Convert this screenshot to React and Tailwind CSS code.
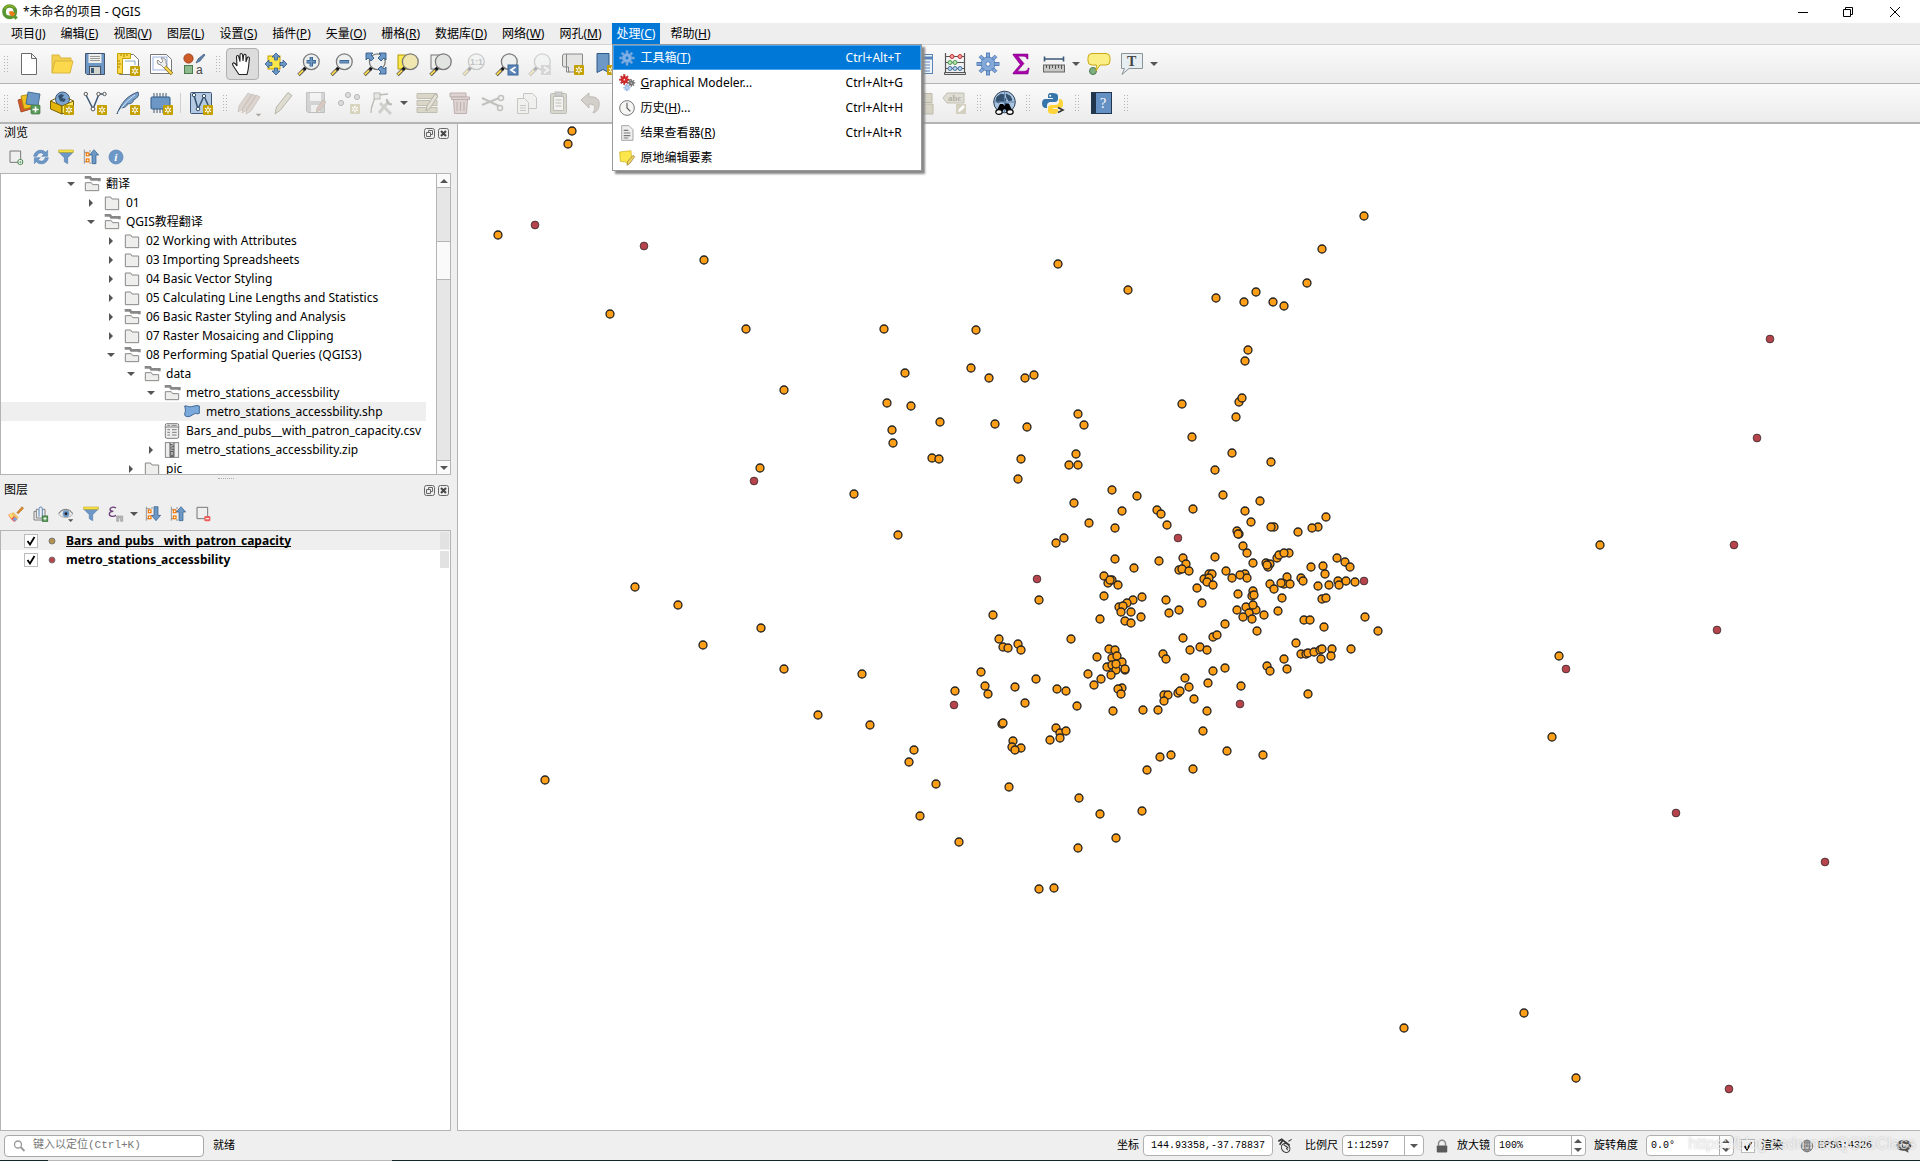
import React, { useState } from "react";

// ---------- icon parts ----------

function Star({ x = 13, y = 13, color = "#c4a000" }) {
  return (
    <g>
      <rect x={x} y={y} width="10" height="10" rx="1" fill={color} />
      <path
        d={`M${x + 5} ${y + 1.5}v7M${x + 2} ${y + 3.2}l6 3.6M${x + 8} ${y + 3.2}l-6 3.6`}
        stroke="#fff"
        strokeWidth="1.3"
      />
      <circle cx={x + 5} cy={y + 5} r="1" fill={color} />
    </g>
  );
}

function Lens({ children, glass = "#eef0f0" }) {
  return (
    <g>
      <path d="M1.5 23L8 16.5" stroke="#4d4d4d" strokeWidth="3.4" />
      <path d="M1.7 22.6L6 18.4" stroke="#fcd94c" strokeWidth="2" />
      <path d="M7 17.5l2-2" stroke="#111" strokeWidth="3" />
      <circle cx="14.3" cy="9.7" r="7.9" fill={glass} stroke="#7a7a7a" strokeWidth="1.3" />
      {children}
    </g>
  );
}

function Gear({ cx, cy, r, fill, stroke, hole = "#fff" }) {
  const teeth = [0, 45, 90, 135, 180, 225, 270, 315];
  return (
    <g>
      {teeth.map(a => (
        <rect
          key={a}
          x={cx - r * 0.14}
          y={cy - r}
          width={r * 0.28}
          height={r * 0.5}
          fill={fill}
          stroke={stroke}
          strokeWidth={r * 0.08}
          transform={`rotate(${a} ${cx} ${cy})`}
        />
      ))}
      <circle cx={cx} cy={cy} r={r * 0.64} fill={fill} stroke={stroke} strokeWidth={r * 0.08} />
      <circle cx={cx} cy={cy} r={r * 0.2} fill={hole} stroke={stroke} strokeWidth={r * 0.08} />
    </g>
  );
}

const GLOBE_LAND = "M5 6l4-3 3 1-1 3 3 1-1 3-4-1-3 2-2-2zM14 3l4 2 2 4-3 1-2-3zM13 12l4 1-1 4-3-1z";

const ICONS = {
  newFile: <path d="M4.5 1.5h10l5 5v16h-15zM14.5 1.5v5h5" fill="#fff" stroke="#6b6b6b" />,
  open: (
    <g stroke="#d8b43c">
      <path d="M2 21V3h7l2 3h10v4" fill="#f3cf4e" />
      <path d="M2 21L5 9h18l-3 12z" fill="#fcd94c" />
    </g>
  ),
  save: (
    <g>
      <path d="M2.5 1.5h19v21H4l-1.5-1.5z" fill="#6d97c4" stroke="#44546a" />
      <rect x="5.5" y="2" width="13" height="9" fill="#eeeeec" />
      <path d="M7 4.5h10M7 6.5h10M7 8.5h10" stroke="#9a9a98" />
      <rect x="6.5" y="14.5" width="11" height="8" fill="#d3d7cf" stroke="#44546a" />
      <rect x="8" y="16" width="3" height="5" fill="#3b5876" />
    </g>
  ),
  layout: (
    <g>
      <path d="M3.5 2.5h14l5 5v15h-19z" fill="#fff" stroke="#777" />
      <path d="M1.5 1.5h13v5h-8v15h-5z" fill="#fcd94c" stroke="#c4a000" />
      <path d="M5 2v2M8 2v3M11 2v2M2 9h2M2 12h3M2 15h2" stroke="#a08000" />
      <path d="M9 9h10v4" stroke="#8ab" fill="none" />
      <Star x={14} y={14} />
    </g>
  ),
  layoutManager: (
    <g>
      <path d="M1.5 2.5h16l5 5v14h-21z" fill="#fff" stroke="#777" />
      <rect x="4" y="5" width="14" height="13" fill="#fff" stroke="#99b3e0" />
      <path d="M9 8l3 3 2-2-2-3a4 4 0 015 5l1 2-3 3-3-3a4 4 0 01-4-4z" fill="#eee" stroke="#777" strokeWidth=".8" />
      <path d="M16 15l7 7" stroke="#8c7320" strokeWidth="3.6" />
      <path d="M16 15l6.5 6.5" stroke="#fcd94c" strokeWidth="2" />
    </g>
  ),
  style: (
    <g>
      <circle cx="6.5" cy="6.5" r="4.6" fill="#cf5c28" stroke="#a0431a" />
      <path d="M14 11l2-4 6-5 1 1-5 6z" fill="#5b84b8" stroke="#44546a" strokeWidth=".7" />
      <rect x="2.5" y="13.5" width="8" height="8" fill="#8fb98f" stroke="#4a7c4e" />
      <text x="14" y="22" fontSize="12" fontFamily="Liberation Sans" fill="#444">a</text>
    </g>
  ),
  pan: (
    <path
      d="M8 22.5L3 15c-1.5-2-2-3.5-.8-4 1.2-.5 2.600 1 3.800 3L5.500 5.200c-.2-2 2-2.200 2.300-.4L9 9.500V3c0-2 2.300-2 2.500 0l.5 6 .6-5.500c.3-1.800 2.400-1.500 2.400.3L15 10l1.200-4c.6-1.700 2.500-1 2.200.6L17.500 15c-.2 3-.8 5-1.500 7.500z"
      fill="#fff"
      stroke="#222"
      strokeWidth="1.1"
    />
  ),
  panSelect: (
    <g>
      <rect x="4" y="4" width="12" height="13" fill="#fbe64b" stroke="#c4a000" />
      <g fill="#6d97c4" stroke="#2f5a88" strokeWidth=".8">
        <path d="M12 1l4 4h-2.500v3h-3V5H8zM12 23l-4-4h2.500v-3h3v3H16zM1 12l4-4v2.500h3v3H5V16zM23 12l-4 4v-2.500h-3v-3h3V8z" />
      </g>
    </g>
  ),
  zoomIn: (
    <Lens>
      <path d="M14.3 5v9.4M9.6 9.7H19" stroke="#2f5a88" strokeWidth="3.4" />
      <path d="M14.3 5.5v8.4M10.1 9.7h8.4" stroke="#6d97c4" strokeWidth="1.8" />
    </Lens>
  ),
  zoomOut: (
    <Lens>
      <path d="M9.5 9.7h9.6" stroke="#2f5a88" strokeWidth="3.4" />
      <path d="M10 9.7h8.6" stroke="#6d97c4" strokeWidth="1.8" />
    </Lens>
  ),
  zoomFull: (
    <g>
      <Lens />
      <path
        d="M3 1h7L8 3l3 3-3 3-3-3-2 2zM23 1v7l-2-2-3 3-3-3 3-3-2-2zM23 22h-7l2-2-3-3 3-3 3 3 2-2z"
        fill="#6d97c4"
        stroke="#2f5a88"
        strokeWidth=".9"
      />
    </g>
  ),
  zoomSelection: (
    <g>
      <rect x="2" y="3" width="13" height="14" fill="#fce94f" stroke="#b39700" />
      <Lens glass="#f0e7b0" />
    </g>
  ),
  zoomLayer: (
    <g>
      <rect x="2" y="3" width="13" height="14" fill="#eee" stroke="#777" />
      <Lens glass="#e2e4e2" />
    </g>
  ),
  zoomNative: (
    <g opacity=".35">
      <Lens>
        <text x="8" y="13" fontSize="9" fontWeight="bold" fontFamily="Liberation Sans" fill="#666">1:1</text>
      </Lens>
    </g>
  ),
  zoomLast: (
    <g>
      <Lens />
      <rect x="13" y="13" width="10" height="10" fill="#5b84b8" stroke="#3c6797" />
      <path d="M20.5 15L16 18l4.5 3" stroke="#fff" strokeWidth="1.7" fill="none" />
    </g>
  ),
  zoomNext: (
    <g opacity=".3">
      <Lens />
      <rect x="13" y="13" width="10" height="10" fill="#999" />
      <path d="M16 15l4.5 3-4.5 3" stroke="#fff" strokeWidth="1.7" fill="none" />
    </g>
  ),
  mapView: (
    <g>
      <path d="M3.5 2h18v18h-14V15h-4a2 2 0 01-2-2V4a2 2 0 012-2z" fill="#e4e4e2" stroke="#888" />
      <path d="M5.5 2v18h3" fill="none" stroke="#888" />
      <Star />
    </g>
  ),
  bookmark: (
    <g>
      <path d="M3 1.5h12v19l-6-3-6 3z" fill="#6d97c4" stroke="#2f5a88" />
      <Star />
    </g>
  ),
  table: (
    <g>
      <rect x="1.5" y="2.5" width="21" height="19" fill="#eef3fa" stroke="#5b84b8" />
      <path d="M1.5 6h21" stroke="#5b84b8" strokeWidth="3" />
      <path d="M4 10h16M4 13h16M4 16h16M4 19h16" stroke="#5b84b8" />
    </g>
  ),
  abacus: (
    <g>
      <path d="M2.5 1v20M21.5 1v20M2 4.5h20M2 10.5h20M2 16.5h20" stroke="#555" strokeWidth="1.2" />
      <path d="M1.5 20.5h21v2h-21z" fill="#ddd" stroke="#555" />
      <g fill="#f3a0a0" stroke="#c23030"><circle cx="9" cy="4.5" r="2" /><circle cx="17" cy="4.5" r="2" /></g>
      <g fill="#b8e6b0" stroke="#4c9a4c"><circle cx="7" cy="10.5" r="2" /><circle cx="12" cy="10.5" r="2" /></g>
      <g fill="#b9d4ee" stroke="#44719e"><circle cx="7" cy="16.5" r="2" /><circle cx="12" cy="16.5" r="2" /><circle cx="17" cy="16.5" r="2" /></g>
    </g>
  ),
  gear: <Gear cx={12} cy={12} r={11} fill="#84a9d8" stroke="#4b7ab5" />,
  sigma: <path d="M4 2h15v5h-1c-.6-2-1.5-2.8-4-2.8H9l6 7.3-6.5 7.7H15c2.5 0 3.6-1 4.2-3.2h1L19 22H4v-1l7.2-8.5L4 3z" fill="#a800a8" stroke="#7b0080" strokeWidth=".5" />,
  ruler: (
    <g>
      <path d="M2 7h20M2.5 4.5v5M21.5 4.5v5" stroke="#3b5876" strokeWidth="1.6" />
      <rect x="1.5" y="13" width="21" height="7" fill="#c8c8c6" stroke="#666" />
      <path d="M4.5 13v3M7.5 13v4M10.5 13v3M13.5 13v4M16.5 13v3M19.5 13v4" stroke="#555" />
    </g>
  ),
  mapTip: (
    <g>
      <circle cx="6" cy="19" r="3.5" fill="#7fae80" stroke="#4a7c4e" />
      <path d="M5 1.5h14a4 4 0 014 4V9a4 4 0 01-4 4h-6l-4 6 .5-6H5a4 4 0 01-4-4V5.5a4 4 0 014-4z" fill="#fbee85" stroke="#c9aa14" />
    </g>
  ),
  textNote: (
    <g>
      <path d="M1.5 1.5h21v15H9l-7 6 2.500-6h-3z" fill="#e6eef2" stroke="#8a9499" />
      <text x="7" y="13.5" fontSize="14" fontWeight="bold" fontFamily="Liberation Serif" fill="#444">T</text>
    </g>
  ),
  dataSource: (
    <g>
      <path d="M1 9l9-3 4 12-10 3z" fill="#d4582a" stroke="#9d3c16" strokeWidth=".8" />
      <path d="M4 5l10-2 3 13-10 2z" fill="#f0c020" stroke="#a58400" strokeWidth=".8" />
      <path d="M11 1l12 2-2 12-12-2z" fill="#6d97c4" stroke="#2f5a88" strokeWidth=".8" />
      <rect x="14" y="14" width="9" height="9" rx="1" fill="#5a9a5a" stroke="#3e7a40" strokeWidth=".7" />
      <path d="M18.5 15.5v6M15.5 18.5h6" stroke="#fff" strokeWidth="1.5" />
    </g>
  ),
  geopackage: (
    <g>
      <circle cx="12.5" cy="8" r="7" fill="#7ba3d0" stroke="#3b5876" />
      <path d="M8 5l3-2 3 1-2 3 4 1-2 3-4-1z" fill="#33506e" />
      <path d="M.5 10L12 15v8L.5 18z" fill="#e3b50a" stroke="#7a6000" />
      <path d="M12 15l11.5-5v8L12 23z" fill="#fcee5a" stroke="#7a6000" />
      <path d="M.5 10l5-2.5M23.5 10l-5-2.5" stroke="#7a6000" />
      <Star x={14} y={14} />
    </g>
  ),
  shapefile: (
    <g>
      <path d="M3 4l7 14 6-15h5" fill="none" stroke="#3b5876" strokeWidth="1.5" />
      <g fill="#fff" stroke="#555"><circle cx="2.8" cy="3" r="1.7" /><circle cx="10" cy="18" r="1.9" /><circle cx="15.5" cy="3" r="1.7" /><circle cx="21.5" cy="3" r="1.7" /></g>
      <Star x={14} y={14} />
    </g>
  ),
  feather: (
    <g>
      <path d="M1 23C5 13 10 5 22 1c2 4-2 7-5 8 1 2-2 4-6 4 1 2-3 4-7 4z" fill="#7ba3d0" stroke="#3b5876" />
      <path d="M2 22C8 13 13 8 19 4" fill="none" stroke="#dbe8f5" />
      <Star x={14} y={14} />
    </g>
  ),
  memory: (
    <g>
      <path d="M5 2v20M8 2v20M11 2v20M14 2v20M17 2v20" stroke="#44546a" />
      <rect x="2" y="6" width="19" height="12" rx="1" fill="#6d97c4" stroke="#2f5a88" />
      <Star x={14} y={14} />
    </g>
  ),
  virtual: (
    <g>
      <rect x="1.5" y="1.5" width="21" height="21" rx="1" fill="#b5cae2" stroke="#3b5876" />
      <path d="M5 4l4 14 6-13 5 11" fill="none" stroke="#33506e" strokeWidth="1.5" />
      <g fill="#fff" stroke="#33506e"><circle cx="5" cy="4" r="1.7" /><circle cx="9" cy="18" r="1.8" /><circle cx="15" cy="5" r="1.7" /></g>
      <Star x={14} y={14} />
    </g>
  ),
  pencils: (
    <g fill="#dcd4ce" stroke="#c9c0ba" strokeWidth=".8">
      <path d="M0 21l1-6L10 2l4 2-9 14zM4 22l1-6 9-13 4 2-9 14zM8 23l1-6 9-13 4 2-9 14z" />
      <path d="M18 23h5l-2.500 2z" fill="#888" />
    </g>
  ),
  pencil: <path d="M4 23l1.5-7L17 1.5l4 3L9.500 19z" fill="#dedbd0" stroke="#b9b6aa" />,
  saveEdits: (
    <g>
      <g opacity=".35"><path d="M2.5 1.5h18v20H4l-1.5-1.5z" fill="#999" stroke="#666" /><path d="M6 2h11v8H6zM7 14h9v7H7z" fill="#eee" /></g>
      <path d="M12 22l1-5 6-8 3 2-6 8z" fill="#dac8c4" stroke="#bba" strokeWidth=".7" />
    </g>
  ),
  addPoint: (
    <g>
      <g fill="#dcdcdc" stroke="#b9b9b9"><circle cx="11" cy="4" r="2.6" /><circle cx="4" cy="12" r="2.6" /><circle cx="20" cy="6" r="2.6" /></g>
      <Star color="#d8d3bc" />
    </g>
  ),
  vertexTool: (
    <g stroke="#b9b9b5" fill="none">
      <path d="M1 22C1 14 5 6 8 5M8 4l10-1" strokeWidth="1.3" />
      <rect x="4" y="2" width="6" height="6" fill="#e6e6e4" />
      <path d="M9 22L19 10M10 12l11 11" strokeWidth="3" stroke="#cfcfcb" />
      <path d="M17 8a4 4 0 005 5" strokeWidth="2" />
    </g>
  ),
  multiEdit: (
    <g>
      <path d="M2 2.5h20v5H2zM2 9.5h20v5H2zM2 16.5h20v5H2z" fill="#dad7c8" stroke="#c0beb0" />
      <path d="M11 20l1-5 8-12 3 2-8 12z" fill="#e4e2d8" stroke="#b5b2a5" />
    </g>
  ),
  trash: (
    <g fill="#dfd3d2" stroke="#bdb0af">
      <path d="M2 2h16v4H2z" />
      <path d="M5.5 8.5h14l-1 14h-12zM3.5 6h18v2.500h-18zM9 11v9M12.5 11v9M16 11v9" />
    </g>
  ),
  cut: (
    <g stroke="#c2c2bf" fill="none" strokeWidth="1.5">
      <path d="M1 7l17 8M1 14l17-7" strokeWidth="2.2" />
      <circle cx="20" cy="7" r="2.5" /><circle cx="19" cy="17" r="2.5" />
    </g>
  ),
  copy: (
    <g fill="#f0f0ee" stroke="#c6c6c3">
      <path d="M9.5 2.5h9l4 4v11h-13z" />
      <path d="M3.5 7.5h7l4 4v11h-11zM6 14.5h6M6 17h6M6 19.5h6" />
    </g>
  ),
  paste: (
    <g stroke="#bdbdb8">
      <rect x="3.5" y="2.5" width="16" height="20" rx="1" fill="#d8d6cc" />
      <path d="M6.5 5.5h10v14h-10zM8.5 9h6M8.5 12h6M8.5 15h6" fill="#f3f3f1" />
      <rect x="8" y="1" width="7" height="4" fill="#ccc" />
    </g>
  ),
  undo: <path d="M1 9l8-7v4c8-1 11 3 10 9-.5 3-2 6-6 7 3-5 3-9-4-9v4z" fill="#d3cfcb" stroke="#beb9b4" />,
  labelMove: <path d="M2 2.5h20v9H2zM13 13h10v10H13z" fill="#d6d3c4" stroke="#bdbaa9" />,
  labelEdit: (
    <g>
      <path d="M0 7l4-5h17v10H4z" fill="#deddd3" stroke="#c2c0b2" />
      <text x="5" y="10" fontSize="9" fontWeight="bold" fontFamily="Liberation Serif" fill="#b2b0a3">abc</text>
      <rect x="13" y="13" width="10" height="10" fill="#d3d0c0" />
      <path d="M15 21l1-3 4-4 2 2-4 4z" fill="#fff" />
    </g>
  ),
  globeSearch: (
    <g>
      <circle cx="12.5" cy="11" r="10.8" fill="#a9c3e0" stroke="#2f4257" />
      <path d={GLOBE_LAND} fill="#33506e" stroke="#33506e" />
      <path d="M2 11h21M12.5 0v22" stroke="#5f82a8" />
      <path d="M8 13h3l1.500 2 1.500-2h3l4 8h-6l-2-3h-1l-2 3H4z" fill="#000" />
      <ellipse cx="7" cy="21" rx="3.2" ry="2.4" fill="#fff" stroke="#000" strokeWidth="1.2" />
      <ellipse cx="18" cy="21" rx="3.2" ry="2.4" fill="#fff" stroke="#000" strokeWidth="1.2" />
    </g>
  ),
  python: (
    <g>
      <path d="M11 2c-4 0-4 1.500-4 3v2h5v1H4.500C2 8 1 10 1 12.500S2.500 17 4.500 17H6v-2.500C6 12.500 7.500 11 9.500 11H14c1.500 0 3-1 3-3V5c0-2-2-3-6-3z" fill="#3776ab" />
      <circle cx="9.2" cy="4.8" r="1" fill="#fff" />
      <path d="M12 23c4 0 5-1.500 5-3v-2h-5v-1h7c2.500 0 3-2 3-4.500S21 8 19 8h-1v2.500c0 2-1.500 3.500-3.500 3.500H10c-1.500 0-3 1-3 3v3c0 2 1.500 3 5 3z" fill="#ffd43b" />
      <path d="M17 16.500l5 2.500-5 2.500" fill="none" stroke="#333" strokeWidth="1.5" />
    </g>
  ),
  help: (
    <g>
      <rect x="1.5" y="1.5" width="20" height="21" fill="#6590c4" stroke="#22364d" />
      <rect x="2" y="2" width="4" height="20" fill="#22364d" />
      <text x="10" y="17" fontSize="14" fontFamily="Liberation Serif" fill="#fff">?</text>
    </g>
  ),
  // panel icons
  addLayer: (
    <g fill="none" stroke="#777" strokeWidth="1.5">
      <path d="M3 3h16v17H3z" />
      <rect x="15" y="16" width="7" height="7" rx="2" fill="#fff" stroke="#4a8a4e" />
      <path d="M18.5 18v3.500M17 19.700h3.500" stroke="#4a8a4e" strokeWidth="1" />
    </g>
  ),
  refresh: (
    <g fill="#6d97c4" stroke="#4b7ab5" strokeWidth=".8">
      <path d="M1 11C2 5 7 1 13 2c3 .4 5 2 6 3l3-3v9h-9l3-3c-4-4-9-2-10 3z" />
      <path d="M23 13c-1 6-6 10-12 9-3-.4-5-2-6-3l-3 3v-9h9l-3 3c4 4 9 2 10-3z" />
    </g>
  ),
  filter: (
    <g>
      <path d="M2 3h20v2.500L14.500 13v9l-5-3v-6L2 5.500z" fill="#6d97c4" stroke="#4b7ab5" />
      <path d="M1 1.500h22v3.500H1z" fill="#fce94f" stroke="#b39700" strokeWidth=".8" />
    </g>
  ),
  collapse: (
    <g>
      <path d="M2 1v21M2 5h6M2 19h6M9 3h3M9 21h3" stroke="#888" strokeWidth="1.3" />
      <rect x="5" y="6" width="4" height="4" fill="#fff" stroke="#f57900" strokeWidth="1.8" />
      <rect x="5" y="15" width="4" height="4" fill="#fff" stroke="#f57900" strokeWidth="1.8" />
      <path d="M16.500 1l7 8h-4v13h-6V9h-4z" fill="#6d97c4" stroke="#2f5a88" />
    </g>
  ),
  expand: (
    <g>
      <path d="M2 1v21M2 4h6M2 19h6M9 3h3" stroke="#888" strokeWidth="1.3" />
      <rect x="5" y="6" width="4" height="4" fill="#fff" stroke="#f57900" strokeWidth="1.8" />
      <rect x="5" y="15" width="4" height="4" fill="#fff" stroke="#f57900" strokeWidth="1.8" />
      <path d="M16.500 22l7-8h-4V1h-6v13h-4z" fill="#6d97c4" stroke="#2f5a88" />
    </g>
  ),
  info: (
    <g>
      <circle cx="12" cy="12" r="10.5" fill="#6d97c4" stroke="#4b7ab5" />
      <text x="9.5" y="18" fontSize="17" fontStyle="italic" fontWeight="bold" fontFamily="Liberation Serif" fill="#fff">i</text>
    </g>
  ),
  brush: (
    <g>
      <path d="M13 10l8-9 2.500 2.500-8 8z" fill="#d98a2b" stroke="#a5641a" strokeWidth=".7" />
      <path d="M8 9l8 8-2 3-9-8z" fill="#e9c46a" />
      <path d="M5 11l9 9-4 4C6 22 2 17 .5 13z" fill="#ef5b4c" />
      <path d="M1 13l4-2 4 4-4 4z" fill="#fbe06a" />
      <path d="M14 20l-4 3-3-3 3-3z" fill="#7aa6dc" />
    </g>
  ),
  addGroup: (
    <g fill="none" stroke="#777" strokeWidth="1.4">
      <path d="M5 8H1.500v13H15M8 5H5v13h13V5h-4" />
      <path d="M9 16V4a2.500 2.500 0 015 0v12" stroke="#4b7ab5" />
      <rect x="14" y="15" width="8" height="8" fill="#5a9a5a" stroke="#3e7a40" />
      <path d="M18 16.500v5M15.500 19h5" stroke="#fff" />
    </g>
  ),
  eye: (
    <g>
      <path d="M1 12c5-8 16-8 21 0-5 7-16 7-21 0z" fill="#eee" stroke="#8a8a8a" />
      <path d="M1 11c5-8 16-8 21 0" fill="none" stroke="#777" strokeWidth="1.5" />
      <circle cx="12" cy="11.5" r="5" fill="#6d97c4" />
      <circle cx="12" cy="11.5" r="2.2" fill="#223" />
      <path d="M15 20h8l-4 4z" fill="#555" />
    </g>
  ),
  epsilon: (
    <g>
      <path d="M12 3C8 .5 3 2 3 5c0 2 2 3 5 3-4 0-6 1.500-6 4 0 4 6 4.500 10 2" fill="none" stroke="#6b3d78" strokeWidth="2" />
      <path d="M13 23v-8h9v8h-3v-5h-3v5z" fill="#bbb" stroke="#888" strokeWidth=".8" />
    </g>
  ),
  removeLayer: (
    <g>
      <path d="M3 2h16v17H3z" fill="none" stroke="#777" strokeWidth="1.5" />
      <rect x="14" y="15" width="9" height="8" rx="2" fill="#ef5b5b" />
      <path d="M16 19h5" stroke="#fff" strokeWidth="1.7" />
    </g>
  ),
  // menu icons
  toolbox: <Gear cx={12} cy={12} r={11} fill="#7fb0e6" stroke="#5f95d2" hole="#0078d7" />,
  modeler: (
    <g>
      <Gear cx={8} cy={7} r={7.5} fill="#d9282b" stroke="#a81b1d" />
      <Gear cx={18.5} cy={12} r={5.5} fill="#777" stroke="#666" />
      <Gear cx={12} cy={19} r={5} fill="#a9c8f0" stroke="#86a9d8" />
    </g>
  ),
  history: (
    <g fill="#f5f5f3" stroke="#777">
      <circle cx="12" cy="12" r="11" strokeWidth="1.5" />
      <path d="M12 4v8l5 5" fill="none" stroke="#555" strokeWidth="1.6" />
    </g>
  ),
  results: (
    <g fill="#eee" stroke="#999" strokeWidth="1.3">
      <path d="M4 1h11l6 6v16H4z" />
      <path d="M7 8h7M7 12h10M7 16h10M7 19.500h7" stroke="#777" strokeWidth="1.7" />
    </g>
  ),
  editInPlace: (
    <g>
      <path d="M1 3l17-2 1 13-4 3-2 4-3-3-8-1z" fill="#fbe64b" stroke="#c9aa14" />
      <path d="M12 23l1-6 8-9 2.500 2-7 10z" fill="#f0d060" stroke="#8a7a30" />
    </g>
  ),
  // tree icons
  folder: <path d="M2 3h8l2 3h10v16H2z" fill="#eeeeec" stroke="#888" strokeWidth="1.5" />,
  folderOpen: (
    <g stroke="#888" strokeWidth="1.5">
      <path d="M1 2h8l2 3h12v3" fill="none" strokeWidth="4" />
      <path d="M2 10h9l2 3h9v9H2z" fill="#eeeeec" />
    </g>
  ),
  polygon: <path d="M1 3c3-1 5 2 10 1 4 0 6-3 12-1v11c-3 2-5-1-8 1-4 2-5 4-9 4-4 0-5-1-5-5 2-3 1-7 0-11z" fill="#7ba9dc" stroke="#2f5a88" strokeWidth="1.3" />,
  csv: (
    <g stroke="#777" strokeWidth="1.4">
      <rect x="2" y="1" width="20" height="22" rx="2" fill="#eee" />
      <path d="M2 6h20M5 3.500h4M11 3.500h8M5 10h4M5 14h4M5 18h4M12 10h7M12 14h7M12 18h7" />
    </g>
  ),
  zip: (
    <g stroke="#777" strokeWidth="1.3">
      <rect x="2" y="1" width="20" height="22" fill="#eee" />
      <path d="M9 1v21h6V1M9 4h4M11 6.500h4M9 9h4M11 11.500h4" fill="#ccc" stroke="#444" />
      <rect x="10.5" y="14" width="3" height="6" fill="#fff" stroke="#444" />
    </g>
  ),
  logo: (
    <g>
      <circle cx="11.5" cy="11.5" r="8.5" fill="none" stroke="#589632" strokeWidth="5.5" />
      <path d="M4 7a9 9 0 0115-1" fill="none" stroke="#93b023" strokeWidth="2" />
      <path d="M13 13l9 9" stroke="#589632" strokeWidth="5" />
      <path d="M11 11h5l4 4-4 4-5-4z" fill="#ee7913" />
    </g>
  ),
  mouse: (
    <g fill="none" stroke="#333" strokeWidth="1.6">
      <path d="M2 5l5-3 12 9M4 10l5-7M8 13l6-7" strokeWidth="2.5" />
      <ellipse cx="13" cy="15" rx="6" ry="7" transform="rotate(-35 13 15)" fill="#eee" />
      <path d="M10 10l7 5M17 5l5-3M14 15l2 3" />
    </g>
  ),
  lock: (
    <g>
      <path d="M6 11V8a6 6 0 0112 0v3" fill="none" stroke="#888" strokeWidth="2.5" />
      <rect x="3" y="11" width="18" height="12" rx="1.5" fill="#5a5a5a" />
    </g>
  ),
  globe: (
    <g fill="none" stroke="#777" strokeWidth="1.5">
      <circle cx="12" cy="12" r="10" fill="#bbb" />
      <path d="M2 12h20M12 2v20M4 6.500h16M4 17.500h16" />
      <ellipse cx="12" cy="12" rx="5" ry="10" />
    </g>
  ),
  message: (
    <g>
      <path d="M12 3c6 0 11 2.500 11 8 0 4-2 6-5 7l1 4-6-3C5 20 1 16 1 11s5-8 11-8z" fill="#555" />
      <path d="M5 11h14" stroke="#ddd" strokeWidth="4" strokeDasharray="4 1.5" />
    </g>
  ),
  search: (
    <g fill="none" stroke="#999" strokeWidth="2.6">
      <circle cx="10" cy="9" r="7" />
      <path d="M15 14l8 8" strokeWidth="3.6" />
    </g>
  )
};

function Icon({ name, className = "size-6" }) {
  return (
    <svg viewBox="0 0 24 24" fill="none" className={`${className} shrink-0 overflow-visible`} aria-hidden="true">
      {ICONS[name]}
    </svg>
  );
}

function Caret({ dir = "down", className = "w-2 h-1" }) {
  const paths = { down: "M0 0h8L4 4z", up: "M0 4h8L4 0z" };
  return (
    <svg viewBox="0 0 8 4" className={`${className} shrink-0`} aria-hidden="true">
      <path d={paths[dir]} fill="#555" />
    </svg>
  );
}

// ---------- data ----------

const MENUS = [
  ["项目", "J"], ["编辑", "E"], ["视图", "V"], ["图层", "L"], ["设置", "S"], ["插件", "P"],
  ["矢量", "O"], ["栅格", "R"], ["数据库", "D"], ["网络", "W"], ["网孔", "M"], ["处理", "C"], ["帮助", "H"]
];

const PROCESSING_ITEMS = [
  { icon: "toolbox", before: "工具箱(", key: "T", after: ")", shortcut: "Ctrl+Alt+T" },
  { icon: "modeler", before: "", key: "G", after: "raphical Modeler...", shortcut: "Ctrl+Alt+G" },
  { icon: "history", before: "历史(", key: "H", after: ")...", shortcut: "Ctrl+Alt+H" },
  { icon: "results", before: "结果查看器(", key: "R", after: ")", shortcut: "Ctrl+Alt+R" },
  { icon: "editInPlace", before: "原地编辑要素", key: "", after: "", shortcut: "" }
];

const TREE = [
  { depth: 0, state: "open", icon: "folderOpen", label: "翻译" },
  { depth: 1, state: "closed", icon: "folder", label: "01" },
  { depth: 1, state: "open", icon: "folderOpen", label: "QGIS教程翻译" },
  { depth: 2, state: "closed", icon: "folder", label: "02 Working with Attributes" },
  { depth: 2, state: "closed", icon: "folder", label: "03 Importing Spreadsheets" },
  { depth: 2, state: "closed", icon: "folder", label: "04 Basic Vector Styling" },
  { depth: 2, state: "closed", icon: "folder", label: "05 Calculating Line Lengths and Statistics" },
  { depth: 2, state: "closed", icon: "folderOpen", label: "06 Basic Raster Styling and Analysis" },
  { depth: 2, state: "closed", icon: "folder", label: "07 Raster Mosaicing and Clipping" },
  { depth: 2, state: "open", icon: "folderOpen", label: "08 Performing Spatial Queries (QGIS3)" },
  { depth: 3, state: "open", icon: "folderOpen", label: "data" },
  { depth: 4, state: "open", icon: "folderOpen", label: "metro_stations_accessbility" },
  { depth: 5, state: "", icon: "polygon", label: "metro_stations_accessbility.shp", selected: true },
  { depth: 4, state: "", icon: "csv", label: "Bars_and_pubs__with_patron_capacity.csv" },
  { depth: 4, state: "closed", icon: "zip", label: "metro_stations_accessbility.zip" },
  { depth: 3, state: "closed", icon: "folder", label: "pic" }
];

const TREE_INDENT = 20;

// window coordinates of the features, shifted to the canvas when drawn
const MAP_ORIGIN = [458, 124];

const BARS = [
  [572,131],[568,144],[498,235],[704,260],[610,314],[746,329],[784,390],[760,468],[854,494],[898,535],
  [635,587],[678,605],[703,645],[761,628],[784,669],[862,674],[818,715],[870,725],[914,750],[909,762],
  [936,784],[920,816],[959,842],[545,780],[884,329],[976,330],[971,368],[989,378],[905,373],[1025,378],
  [1034,375],[887,403],[911,406],[940,422],[892,430],[893,443],[932,458],[939,459],[995,424],[1027,427],
  [1078,414],[1084,425],[1021,459],[1018,479],[1076,454],[1069,465],[1078,465],[1058,264],[1128,290],
  [1216,298],[1244,302],[1256,292],[1273,302],[1284,306],[1307,283],[1322,249],[1364,216],[1248,350],
  [1245,361],[1009,787],[1079,798],[1100,814],[1142,811],[1116,838],[1078,848],[1039,889],[1054,888],
  [1147,770],[1160,757],[1171,755],[1193,769],[1203,731],[1227,751],[1263,755],[1600,545],[1559,656],
  [1552,737],[1524,1013],[1404,1028],[1576,1078],
  [1112,490],[1137,496],[1074,503],[1122,511],[1157,510],[1161,514],[1089,523],[1115,528],[1167,525],
  [1064,538],[1056,543],[1115,559],[1159,561],[1134,568],[1104,576],[1108,583],[1112,580],[1110,580],
  [1118,585],[1039,600],[1104,596],[1142,597],[1133,600],[1127,603],[1119,607],[1123,606],[1121,612],
  [1131,612],[1141,617],[1125,621],[1131,623],[1100,619],[993,615],[1166,600],[1169,613],[999,639],
  [1003,647],[1008,648],[1018,644],[1021,650],[1071,639],[1097,657],[1109,649],[1115,650],[1112,658],
  [1117,656],[1122,662],[1107,667],[1112,665],[1116,670],[1116,664],[1125,670],[1125,669],[1111,675],
  [1163,654],[1166,659],[981,672],[985,686],[988,694],[955,691],[1015,687],[1025,703],[1036,679],
  [1057,689],[1066,691],[1077,706],[1088,674],[1101,679],[1094,685],[1122,688],[1118,689],[1121,694],
  [1113,711],[1143,710],[1158,710],[1164,695],[1168,695],[1164,701],[1002,724],[1003,723],[1013,741],
  [1012,747],[1021,748],[1015,750],[1056,728],[1060,733],[1066,731],[1060,738],[1050,740],
  [1182,404],[1239,402],[1242,398],[1236,417],[1192,437],[1232,453],[1271,462],[1215,470],[1223,495],
  [1260,501],[1193,509],[1245,511],[1251,522],[1326,517],[1318,527],[1312,528],[1298,532],[1274,527],
  [1271,527],[1237,531],[1239,534],[1238,534],[1243,546],[1247,553],[1215,557],[1253,563],[1266,563],
  [1270,564],[1268,567],[1267,565],[1277,558],[1279,555],[1289,553],[1284,553],[1183,558],[1186,564],
  [1179,570],[1182,569],[1189,571],[1226,571],[1232,578],[1245,574],[1240,575],[1247,578],[1209,574],
  [1212,574],[1204,579],[1209,578],[1207,582],[1213,585],[1197,588],[1202,603],[1311,567],[1323,566],
  [1325,574],[1337,558],[1345,562],[1350,567],[1301,578],[1303,581],[1287,577],[1270,584],[1274,589],
  [1284,584],[1281,583],[1290,584],[1282,598],[1318,586],[1329,585],[1338,581],[1339,585],[1346,581],
  [1355,582],[1322,599],[1326,598],[1238,594],[1253,591],[1252,596],[1254,595],[1237,610],[1246,607],
  [1256,610],[1253,605],[1249,613],[1243,617],[1252,619],[1264,615],[1278,611],[1257,631],[1225,624],
  [1304,620],[1310,620],[1324,627],[1365,617],[1378,631],[1296,643],[1179,610],[1183,638],[1213,637],
  [1217,635],[1190,650],[1200,647],[1207,650],[1301,654],[1306,654],[1308,653],[1314,652],[1320,650],
  [1322,649],[1332,649],[1331,656],[1321,659],[1351,649],[1284,659],[1287,669],[1267,666],[1270,671],
  [1213,671],[1225,668],[1208,683],[1185,678],[1189,687],[1178,693],[1180,691],[1194,699],[1207,711],
  [1241,686],[1308,694]
];

const STATIONS = [
  [535,225],[644,246],[754,481],[1037,579],[954,705],[1178,538],[1364,581],[1240,704],[1770,339],
  [1757,438],[1734,545],[1717,630],[1566,669],[1676,813],[1825,862],[1729,1089]
];

// ---------- window parts ----------

function TitleBar() {
  return (
    <header className="flex h-[23px] shrink-0 items-center bg-white pl-0.5">
      <Icon name="logo" className="size-4" />
      <h1 className="ml-[5px] flex-1 text-xs">*未命名的项目 - QGIS</h1>
      <button type="button" aria-label="最小化" className="flex w-[45px] justify-center">
        <svg viewBox="0 0 10 10" className="size-[10px]"><path d="M0 5.500h10" stroke="#000" /></svg>
      </button>
      <button type="button" aria-label="还原" className="flex w-[45px] justify-center">
        <svg viewBox="0 0 10 10" className="size-[10px]" fill="none" stroke="#000">
          <path d="M.5 2.500h7v7h-7zM2.500 2.500v-2h7v7h-2" />
        </svg>
      </button>
      <button type="button" aria-label="关闭" className="flex w-[50px] justify-center">
        <svg viewBox="0 0 10 10" className="size-[10px]"><path d="M0 0l10 10M10 0L0 10" stroke="#000" /></svg>
      </button>
    </header>
  );
}

function ProcessingMenu() {
  return (
    <ul className="absolute top-full left-0 z-20 w-[310px] border border-[#999] bg-white text-black shadow-[3px_3px_2px_#888]">
      {PROCESSING_ITEMS.map((item, i) => (
        <li key={item.icon}>
          <button
            type="button"
            className={`flex h-[25px] w-full items-center border pr-3 pl-[5px] text-left ${
              i === 0 ? "border-[#4aa3ee] bg-[#0078d7] text-white" : "border-transparent"
            }`}
          >
            <Icon name={item.icon} className="size-4" />
            <span className="ml-1.5 flex-1">
              {item.before}<u>{item.key}</u>{item.after}
            </span>
            <span className="w-[62px] whitespace-nowrap">{item.shortcut}</span>
          </button>
        </li>
      ))}
    </ul>
  );
}

function MenuBar({ active }) {
  return (
    <nav className="flex h-[22px] shrink-0 gap-[5px] border-b border-[#d4d4d4] bg-[#eee] pl-1.5 text-xs">
      {MENUS.map(([label, key]) => (
        <div key={key} className="relative">
          <button
            type="button"
            className={`h-[22px] whitespace-nowrap px-[5px] ${key === active ? "bg-[#0078d7] text-white" : ""}`}
          >
            {label}(<u>{key}</u>)
          </button>
          {key === active && <ProcessingMenu />}
        </div>
      ))}
    </nav>
  );
}

function Grip({ className = "w-4" }) {
  return (
    <div className={`${className} flex shrink-0 justify-center`}>
      <div className="h-[18px] w-1.5 bg-[radial-gradient(#b5b5b5_1px,transparent_1px)] bg-[length:3px_3px]" />
    </div>
  );
}

function Tool({ name, pressed }) {
  return (
    <button
      type="button"
      aria-label={name}
      className={`flex h-8 w-[33px] shrink-0 items-center justify-center ${
        pressed ? "rounded-sm border border-[#b0b0b0] bg-[#dcdcdc]" : ""
      }`}
    >
      <Icon name={name} />
    </button>
  );
}

function ToolArrow() {
  return (
    <button type="button" aria-label="更多" className="flex w-3 shrink-0 justify-center">
      <Caret />
    </button>
  );
}

const BAR = "flex shrink-0 items-center bg-linear-to-b from-[#fafafa] to-[#ececec]";

function Toolbars() {
  return (
    <>
      <div className={`${BAR} h-[39px] border-b border-[#b4b4b4]`}>
        <Grip className="w-3" />
        {["newFile", "open", "save", "layout", "layoutManager", "style"].map(n => <Tool key={n} name={n} />)}
        <Grip />
        <Tool name="pan" pressed />
        {["panSelect", "zoomIn", "zoomOut", "zoomFull", "zoomSelection", "zoomLayer", "zoomNative", "zoomLast", "zoomNext", "mapView", "bookmark"].map(n => (
          <Tool key={n} name={n} />
        ))}
        <div className="w-[283px] shrink-0" />
        {["table", "abacus", "gear", "sigma", "ruler"].map(n => <Tool key={n} name={n} />)}
        <ToolArrow />
        <Tool name="mapTip" />
        <Tool name="textNote" />
        <ToolArrow />
      </div>
      <div className={`${BAR} h-10 border-b-2 border-[#b4b4b4]`}>
        <Grip className="w-3" />
        {["dataSource", "geopackage", "shapefile", "feather", "memory"].map(n => <Tool key={n} name={n} />)}
        <div className="flex w-[7px] shrink-0 justify-center"><div className="h-5 w-px bg-[#d0d0d0]" /></div>
        <Tool name="virtual" />
        <Grip />
        {["pencils", "pencil", "saveEdits", "addPoint", "vertexTool"].map(n => <Tool key={n} name={n} />)}
        <ToolArrow />
        {["multiEdit", "trash", "cut", "copy", "paste", "undo"].map(n => <Tool key={n} name={n} />)}
        <div className="w-[297px] shrink-0" />
        <Tool name="labelMove" />
        <Tool name="labelEdit" />
        <Grip />
        <Tool name="globeSearch" />
        <Grip />
        <Tool name="python" />
        <Grip />
        <Tool name="help" />
        <Grip />
      </div>
    </>
  );
}

function PanelHeader({ title }) {
  return (
    <div className="flex h-[18px] shrink-0 items-center pr-0.5 pl-1 text-xs">
      <h2 className="flex-1">{title}</h2>
      <button type="button" aria-label="浮动" className="mr-[3px]">
        <svg viewBox="0 0 11 11" className="size-[11px]" fill="none" stroke="#666">
          <rect x=".5" y=".5" width="10" height="10" rx="2" />
          <path d="M2.500 4.500h4v4h-4zM4.500 4.500v-2h4v4h-2" />
        </svg>
      </button>
      <button type="button" aria-label="关闭">
        <svg viewBox="0 0 11 11" className="size-[11px]" fill="none" stroke="#666">
          <rect x=".5" y=".5" width="10" height="10" rx="2" />
          <path d="M3 3l5 5M8 3l-5 5" stroke="#444" strokeWidth="2" />
        </svg>
      </button>
    </div>
  );
}

function PanelTool({ name }) {
  return (
    <button type="button" aria-label={name} className="flex w-[25px] justify-center">
      <Icon name={name} className="size-4" />
    </button>
  );
}

function TreeRow({ row }) {
  return (
    <li
      className={`mr-2.5 flex h-[19px] items-center whitespace-nowrap ${row.selected ? "bg-[#efefef]" : ""}`}
      style={{ paddingLeft: 65 + row.depth * TREE_INDENT }}
    >
      <span className="flex w-[10px] justify-center">
        {row.state === "open" && <Caret />}
        {row.state === "closed" && (
          <svg viewBox="0 0 4 8" className="h-2 w-1"><path d="M0 0v8l4-4z" fill="#555" /></svg>
        )}
      </span>
      <Icon name={row.icon} className="ml-2 size-4" />
      <span className="ml-1.5">{row.label}</span>
    </li>
  );
}

function BrowserPanel() {
  return (
    <section className="flex flex-col">
      <PanelHeader title="浏览" />
      <div className="flex h-[31px] items-center pb-0.5 pl-[3px]">
        {["addLayer", "refresh", "filter", "collapse", "info"].map(n => <PanelTool key={n} name={n} />)}
      </div>
      <div className="flex h-[302px] border border-[#b4b4b4] bg-white text-xs">
        <ul className="min-w-0 flex-1 overflow-hidden">
          {TREE.map(row => <TreeRow key={row.label + row.depth} row={row} />)}
        </ul>
        <div className="flex w-[14px] shrink-0 flex-col border-l border-[#b4b4b4] bg-[#e6e6e6]">
          <button type="button" aria-label="向上" className="flex h-[14px] items-center justify-center border-b border-[#b4b4b4] bg-[#fafafa]">
            <Caret dir="up" />
          </button>
          <div className="h-[53px]" />
          <div className="h-[39px] border-y border-[#b4b4b4] bg-[#fafafa]" />
          <div className="flex-1" />
          <button type="button" aria-label="向下" className="flex h-[14px] items-center justify-center border-t border-[#b4b4b4] bg-[#fafafa]">
            <Caret />
          </button>
        </div>
      </div>
    </section>
  );
}

function CheckBox({ id, checked, onChange }) {
  return (
    <span className="grid size-[14px] shrink-0 place-items-center">
      <input
        id={id}
        type="checkbox"
        checked={checked}
        onChange={onChange}
        className="col-start-1 row-start-1 size-[14px] appearance-none border border-[#bbb] bg-white"
      />
      {checked && (
        <svg viewBox="0 0 10 10" className="pointer-events-none col-start-1 row-start-1 size-[10px]">
          <path d="M1.500 5l2.500 3.500L8.500 1" fill="none" stroke="#000" strokeWidth="1.8" />
        </svg>
      )}
    </span>
  );
}

function LayersPanel() {
  const [layers, setLayers] = useState([
    { name: "Bars_and_pubs__with_patron_capacity", color: "#b5904a", visible: true, current: true },
    { name: "metro_stations_accessbility", color: "#b5444c", visible: true, current: false }
  ]);

  const toggle = (name) => {
    setLayers(prev => prev.map(l => (l.name === name ? { ...l, visible: !l.visible } : l)));
  };

  return (
    <section className="flex min-h-0 flex-1 flex-col">
      <PanelHeader title="图层" />
      <div className="flex h-[31px] shrink-0 items-center pb-0.5 pl-[3px]">
        {["brush", "addGroup", "eye", "filter", "epsilon"].map(n => <PanelTool key={n} name={n} />)}
        <ToolArrow />
        {["expand", "collapse", "removeLayer"].map(n => <PanelTool key={n} name={n} />)}
      </div>
      <ul className="min-h-0 flex-1 border border-[#b4b4b4] bg-white text-xs font-bold">
        {layers.map(layer => (
          <li key={layer.name} className={`flex h-[19px] items-center pl-[23px] ${layer.current ? "bg-[#efefef]" : ""}`}>
            <CheckBox id={layer.name} checked={layer.visible} onChange={() => toggle(layer.name)} />
            <svg viewBox="0 0 8 8" className="ml-[10px] size-2">
              <circle cx="4" cy="4" r="3" fill={layer.color} stroke="#777" />
            </svg>
            <label htmlFor={layer.name} className={`ml-[10px] flex-1 whitespace-nowrap ${layer.current ? "underline [text-decoration-skip-ink:none]" : ""}`}>
              {layer.name}
            </label>
            <span className="mr-px h-[17px] w-[9px] bg-[#e2e2e2]" />
          </li>
        ))}
      </ul>
    </section>
  );
}

function MapCanvas() {
  return (
    <main className="min-w-0 flex-1 border-b border-l border-[#b4b4b4] bg-white">
      <svg className="block h-full w-full" aria-label="地图">
        <g transform={`translate(${-MAP_ORIGIN[0]} ${-MAP_ORIGIN[1]})`} stroke="#232323">
          {BARS.map(([x, y], i) => (
            <circle key={i} cx={x} cy={y} r="4" fill="#ff9e17" strokeWidth="1.3" />
          ))}
          {STATIONS.map(([x, y], i) => (
            <circle key={i} cx={x} cy={y} r="3.9" fill="#b5444c" strokeOpacity=".7" />
          ))}
        </g>
      </svg>
    </main>
  );
}

const FIELD = "h-[21px] rounded-sm border border-[#b0b0b0] bg-white";

function SpinBox({ id, value, className }) {
  return (
    <div className={`${FIELD} ${className} flex`}>
      <input id={id} type="text" defaultValue={value} className="min-w-0 flex-1 pl-1 font-['Liberation_Mono',monospace] text-[10px] outline-none" />
      <div className="flex w-[14px] flex-col border-l border-[#b0b0b0]">
        <button type="button" aria-label="增加" className="flex flex-1 items-center justify-center"><Caret dir="up" /></button>
        <button type="button" aria-label="减少" className="flex flex-1 items-center justify-center"><Caret /></button>
      </div>
    </div>
  );
}

function StatusBar() {
  const [render, setRender] = useState(true);

  return (
    <footer className="relative flex h-[29px] shrink-0 items-center bg-[#efefef] pr-2 pl-1 text-[11px]">
      <label className="flex h-[22px] w-[200px] items-center rounded-sm border border-[#a8a8a8] bg-white pl-2">
        <Icon name="search" className="size-3" />
        <input
          type="text"
          aria-label="定位"
          placeholder="键入以定位(Ctrl+K)"
          className="ml-2 min-w-0 flex-1 font-['Liberation_Mono','Noto_Sans_CJK_SC',monospace] text-[11px] outline-none placeholder:text-[#777]"
        />
      </label>
      <span className="ml-[9px] flex-1">就绪</span>

      <label htmlFor="coords">坐标</label>
      <input id="coords" type="text" defaultValue="144.93358,-37.78837" className={`${FIELD} ml-1 w-[130px] text-center font-['Liberation_Mono',monospace] text-[10px]`} />
      <Icon name="mouse" className="ml-1 size-4" />
      <label htmlFor="scale" className="ml-3">比例尺</label>
      <div className="ml-1 grid w-[82px] items-center">
        <select id="scale" className={`${FIELD} col-start-1 row-start-1 appearance-none pl-1 font-['Liberation_Mono',monospace] text-[10px]`}>
          <option>1:12597</option>
        </select>
        <span className="pointer-events-none col-start-1 row-start-1 flex h-[19px] w-5 items-center justify-center justify-self-end border-l border-[#b0b0b0]">
          <Caret />
        </span>
      </div>
      <Icon name="lock" className="ml-[11px] size-[14px]" />
      <label htmlFor="magnifier" className="ml-2">放大镜</label>
      <SpinBox id="magnifier" value="100%" className="ml-1 w-[92px]" />
      <label htmlFor="rotation" className="ml-2">旋转角度</label>
      <SpinBox id="rotation" value="0.0°" className="ml-2 w-[88px]" />
      <span className="ml-[7px] flex items-center gap-1.5">
        <CheckBox id="render" checked={render} onChange={() => setRender(!render)} />
        <label htmlFor="render">渲染</label>
      </span>
      <button type="button" className="ml-[17px] flex items-center gap-1">
        <Icon name="globe" className="size-[14px]" />
        <span className="font-['Liberation_Mono',monospace] text-[10px]">EPSG:4326</span>
      </button>
      <button type="button" aria-label="消息" className="ml-6"><Icon name="message" className="size-4" /></button>

      <span className="pointer-events-none absolute right-1 bottom-1 font-['Liberation_Sans',sans-serif] text-base whitespace-nowrap text-white/70 [text-shadow:0_0_2px_#00000040]">
        https://blog.csdn.net/QGISClass
      </span>
    </footer>
  );
}

export default function App() {
  return (
    <div className="flex h-screen flex-col overflow-hidden bg-[#efefef] font-['Noto_Sans','Noto_Sans_CJK_SC',sans-serif] text-black">
      <TitleBar />
      <MenuBar active="C" />
      <Toolbars />
      <div className="flex min-h-0 flex-1">
        <aside className="flex w-[451px] shrink-0 flex-col">
          <BrowserPanel />
          <div className="flex h-1.5 shrink-0 items-center justify-center">
            <div className="w-4 border-t border-dotted border-[#aaa]" />
          </div>
          <LayersPanel />
        </aside>
        <div className="w-1.5 shrink-0" />
        <MapCanvas />
      </div>
      <StatusBar />
      <div className="flex h-px shrink-0 bg-[#14252c]">
        <div className="ml-12 w-[344px] bg-[#b8b8b8]" />
      </div>
    </div>
  );
}
